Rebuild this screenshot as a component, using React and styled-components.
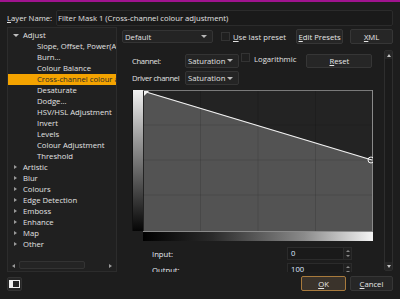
import React from 'react'
import styled, { createGlobalStyle } from 'styled-components'

const GlobalStyle = createGlobalStyle`
  html, body { margin: 0; padding: 0; background: #1d1d1d; }
  body { font-family: "Open Sans", "Noto Sans", sans-serif; }
`

const Window = styled.div`
  width: 400px;
  height: 299px;
  box-sizing: border-box;
  border-top: 2px solid #a0138e;
  background: #1d1d1d;
  color: #e2e2e2;
  font-size: 7.7px;
  padding: 8px 7px 0 7px;
  display: flex;
  flex-direction: column;
  overflow: hidden;
`

const NameRow = styled.div`
  display: flex;
  align-items: center;
  height: 16px;
`

const NameLabel = styled.div`
  width: 49px;
  white-space: nowrap;
`

const TextField = styled.div`
  flex: 1;
  height: 16px;
  box-sizing: border-box;
  background: #1a1a1a;
  border: 1px solid #2b2b2b;
  border-radius: 2px;
  padding-left: 1px;
  line-height: 14px;
  white-space: nowrap;
  overflow: hidden;
`

const Main = styled.div`
  display: flex;
  gap: 5px;
  margin-top: 1px;
  height: 245px;
`

const TreePanel = styled.div`
  width: 110px;
  box-sizing: border-box;
  background: #202020;
  border: 1px solid #2c2c2c;
  display: flex;
  flex-direction: column;
`

const TreeList = styled.div`
  flex: 1;
  padding-top: 2px;
  overflow: hidden;
`

const TreeRow = styled.div`
  height: 11px;
  line-height: 11px;
  position: relative;
  padding-left: ${p => (p.$level ? 29 : 15)}px;
  white-space: nowrap;
  overflow: hidden;
  background: ${p => (p.$selected ? '#f4a300' : 'transparent')};
  color: ${p => (p.$selected ? '#2a2a2a' : '#e2e2e2')};
`

const Arrow = styled.span`
  position: absolute;
  left: 5px;
  top: ${p => (p.$open ? 4 : 3)}px;
  width: 0;
  height: 0;
  ${p =>
    p.$open
      ? 'border-left: 3px solid transparent; border-right: 3px solid transparent; border-top: 3px solid #bdbdbd;'
      : 'border-top: 2.5px solid transparent; border-bottom: 2.5px solid transparent; border-left: 3px solid #9a9a9a; left: 6px;'}
`

const HScroll = styled.div`
  height: 9px;
  margin: 0 0 1px 0;
  display: flex;
  align-items: center;
  gap: 2px;
  padding: 0 2px;
`

const ScrollArrow = styled.span`
  width: 0;
  height: 0;
  border-top: 2.5px solid transparent;
  border-bottom: 2.5px solid transparent;
  ${p => (p.$dir === 'left' ? 'border-right: 3px solid #9a9a9a;' : 'border-left: 3px solid #9a9a9a;')}
  margin: 0 2px;
`

const HTrack = styled.div`
  flex: 1;
  height: 9px;
  display: flex;
`

const HThumb = styled.div`
  width: 66px;
  height: 8px;
  box-sizing: border-box;
  border: 1px solid #333;
  border-radius: 2px;
  background: #242424;
`

const RightColumn = styled.div`
  flex: 1;
  display: flex;
  flex-direction: column;
`

const PresetRow = styled.div`
  display: flex;
  align-items: center;
  height: 15px;
  margin-top: 2px;
`

const Dropdown = styled.div`
  width: ${p => p.$width}px;
  height: ${p => p.$height || 13}px;
  box-sizing: border-box;
  background: #242424;
  border: 1px solid #343434;
  border-radius: 2px;
  display: flex;
  align-items: center;
  justify-content: space-between;
  padding: 0 5px 0 2px;
  white-space: nowrap;
  flex: none;
  &::after {
    content: '';
    border-left: 3px solid transparent;
    border-right: 3px solid transparent;
    border-top: 3px solid #b8b8b8;
  }
`

const Check = styled.span`
  width: 9px;
  height: 9px;
  box-sizing: border-box;
  background: #1f1f1f;
  border: 1px solid #333;
  margin-left: ${p => p.$ml || 0}px;
  flex: none;
  align-self: ${p => (p.$top ? 'flex-start' : 'auto')};
`

const CheckText = styled.span`
  margin-left: ${p => p.$ml || 3}px;
  white-space: nowrap;
  position: relative;
  top: ${p => p.$up || 0}px;
`

const Button = styled.div`
  width: ${p => p.$width}px;
  height: ${p => p.$height || 15}px;
  box-sizing: border-box;
  margin-left: ${p => p.$ml || 0}px;
  background: ${p => (p.$primary ? '#3a332b' : '#262626')};
  border: 1px solid ${p => (p.$primary ? '#a87a3c' : '#363636')};
  border-radius: 2px;
  display: flex;
  align-items: center;
  justify-content: center;
  white-space: nowrap;
  color: #e6e6e6;
  flex: none;
`

const U = styled.span`
  text-decoration: underline;
`

const ScrollArea = styled.div`
  display: flex;
  margin-top: 4px;
  height: 224px;
  overflow: hidden;
`

const Content = styled.div`
  flex: 1;
  padding: 5px 0 0 10px;
`

const FormRow = styled.div`
  display: flex;
  align-items: center;
  height: ${p => p.$h || 14}px;
  margin-top: ${p => p.$mt || 0}px;
`

const FormLabel = styled.div`
  width: 53px;
  flex: none;
  white-space: nowrap;
  letter-spacing: -0.35px;
`

const VScroll = styled.div`
  width: 9px;
  margin: 2px 0 1px 0;
  box-sizing: border-box;
  border: 1px solid #2e2e2e;
  border-radius: 2px;
  background: #1b1b1b;
  display: flex;
  flex-direction: column;
  justify-content: space-between;
  align-items: center;
`

const VArrow = styled.div`
  width: 7px;
  height: 8px;
  display: flex;
  align-items: center;
  justify-content: center;
  background: #262626;
  &::after {
    content: '';
    border-left: 2.5px solid transparent;
    border-right: 2.5px solid transparent;
    ${p => (p.$dir === 'up' ? 'border-bottom: 3px solid #c4c4c4;' : 'border-top: 3px solid #c4c4c4;')}
  }
`

const Curve = styled.div`
  margin-top: 5px;
  display: grid;
  grid-template-columns: 11px 230px;
  grid-template-rows: 141px 10px;
`

const SideRamp = styled.div`
  box-sizing: border-box;
  border-left: 1px solid #111;
  background: linear-gradient(to bottom, #f2f2f2 0%, #9a9a9a 35%, #4a4a4a 70%, #050505 100%);
`

const BottomRamp = styled.div`
  grid-column: 2;
  box-sizing: border-box;
  border-top: 1px solid #8a8a8a;
  background: linear-gradient(to right, #000 0%, #2a2a2a 30%, #8a8a8a 70%, #f4f4f4 100%);
`

const CurveBox = styled.svg`
  display: block;
  width: 230px;
  height: 141px;
`

const SpinRow = styled.div`
  display: flex;
  align-items: center;
  height: 13px;
  margin-top: ${p => p.$mt}px;
`

const SpinLabel = styled.div`
  width: 155px;
  padding-left: 20px;
  box-sizing: border-box;
  color: #e8ecf4;
`

const SpinField = styled.div`
  width: 56px;
  height: 13px;
  box-sizing: border-box;
  background: #1a1a1a;
  border: 1px solid #2b2b2b;
  border-right: none;
  padding-left: 3px;
  line-height: 11px;
  color: #dfe8ff;
`

const SpinButtons = styled.div`
  width: 9px;
  height: 13px;
  box-sizing: border-box;
  border: 1px solid #2b2b2b;
  background: #202020;
  display: flex;
  flex-direction: column;
  align-items: center;
  justify-content: space-around;
  &::before, &::after {
    content: '';
    border-left: 2px solid transparent;
    border-right: 2px solid transparent;
  }
  &::before { border-bottom: 2px solid #8a8a8a; }
  &::after { border-top: 2px solid #8a8a8a; }
`

const BottomRow = styled.div`
  display: flex;
  align-items: center;
  margin-top: 4px;
  height: 15px;
`

const IconButton = styled.div`
  width: 15px;
  height: 14px;
  box-sizing: border-box;
  border: 1px solid #333;
  border-radius: 2px;
  background: #262626;
  display: flex;
  align-items: center;
  justify-content: center;
  margin-right: auto;
`

const tree = [
  { label: 'Adjust', open: true },
  { label: 'Slope, Offset, Power(ASC-CDL)', level: 1 },
  { label: 'Burn...', level: 1 },
  { label: 'Colour Balance', level: 1 },
  { label: 'Cross-channel colour adjustment', level: 1, selected: true },
  { label: 'Desaturate', level: 1 },
  { label: 'Dodge...', level: 1 },
  { label: 'HSV/HSL Adjustment', level: 1 },
  { label: 'Invert', level: 1 },
  { label: 'Levels', level: 1 },
  { label: 'Colour Adjustment', level: 1 },
  { label: 'Threshold', level: 1 },
  { label: 'Artistic' },
  { label: 'Blur' },
  { label: 'Colours' },
  { label: 'Edge Detection' },
  { label: 'Emboss' },
  { label: 'Enhance' },
  { label: 'Map' },
  { label: 'Other' },
]

function CurveGraph() {
  const grid = [57.5, 115, 172.5]
  return (
    <CurveBox viewBox="0 0 230 141">
      <rect x="0" y="0" width="230" height="141" fill="#232323" />
      <polygon points="1,1 229,70 229,141 1,141" fill="#535353" />
      {grid.map(x => (
        <line key={'v' + x} x1={x} y1="0" x2={x} y2="141" stroke="#000" strokeOpacity="0.12" />
      ))}
      {[35, 70, 105].map(y => (
        <line key={'h' + y} x1="0" y1={y} x2="230" y2={y} stroke="#000" strokeOpacity="0.1" />
      ))}
      <line x1="0" y1="0.5" x2="230" y2="0.5" stroke="#7a7a7a" />
      <line x1="229.5" y1="0" x2="229.5" y2="141" stroke="#8a8a8a" />
      <line x1="1.5" y1="1.5" x2="229" y2="70" stroke="#f2f2f2" strokeWidth="1.3" />
      <polygon points="1,1 6,1 1,6" fill="#f2f2f2" />
      <circle cx="228" cy="70" r="3" fill="none" stroke="#f2f2f2" strokeWidth="1" />
    </CurveBox>
  )
}

export default function App() {
  return (
    <Window>
      <GlobalStyle />
      <NameRow>
        <NameLabel><U>L</U>ayer Name:</NameLabel>
        <TextField>Filter Mask 1 (Cross-channel colour adjustment)</TextField>
      </NameRow>
      <Main>
        <TreePanel>
          <TreeList>
            {tree.map(item => (
              <TreeRow key={item.label} $level={item.level} $selected={item.selected}>
                {!item.level && <Arrow $open={item.open} />}
                {item.label}
              </TreeRow>
            ))}
          </TreeList>
          <HScroll>
            <ScrollArrow $dir="left" />
            <HTrack><HThumb /></HTrack>
            <ScrollArrow $dir="right" />
          </HScroll>
        </TreePanel>
        <RightColumn>
          <PresetRow>
            <Dropdown $width={91}>Default</Dropdown>
            <Check $ml={8} />
            <CheckText $ml={3}><U>U</U>se last preset</CheckText>
            <Button $width={47} $ml={10}><U>E</U>dit Presets</Button>
            <Button $width={43} $ml={7}><U>X</U>ML</Button>
          </PresetRow>
          <ScrollArea>
            <Content>
              <FormRow $h={15}>
                <FormLabel>Channel:</FormLabel>
                <Dropdown $width={54} $height={14}>Saturation</Dropdown>
                <Check $ml={2} $top />
                <CheckText $ml={4} $up={-2}>Logarithmic</CheckText>
                <Button $width={66} $height={14} $ml={10}><U>R</U>eset</Button>
              </FormRow>
              <FormRow $mt={3}>
                <FormLabel>Driver channel</FormLabel>
                <Dropdown $width={54} $height={14}>Saturation</Dropdown>
              </FormRow>
              <Curve>
                <SideRamp />
                <CurveGraph />
                <BottomRamp />
              </Curve>
              <SpinRow $mt={6}>
                <SpinLabel>Input:</SpinLabel>
                <SpinField>0</SpinField>
                <SpinButtons />
              </SpinRow>
              <SpinRow $mt={3}>
                <SpinLabel>Output:</SpinLabel>
                <SpinField>100</SpinField>
                <SpinButtons />
              </SpinRow>
            </Content>
            <VScroll>
              <VArrow $dir="up" />
              <VArrow $dir="down" />
            </VScroll>
          </ScrollArea>
        </RightColumn>
      </Main>
      <BottomRow>
        <IconButton>
          <svg width="11" height="8" viewBox="0 0 11 8">
            <rect x="0.5" y="0.5" width="10" height="7" fill="none" stroke="#f0f0f0" />
            <rect x="1" y="1" width="3" height="6" fill="#f0f0f0" />
          </svg>
        </IconButton>
        <Button $width={45} $primary><U>O</U>K</Button>
        <Button $width={43} $ml={4}><U>C</U>ancel</Button>
      </BottomRow>
    </Window>
  )
}
